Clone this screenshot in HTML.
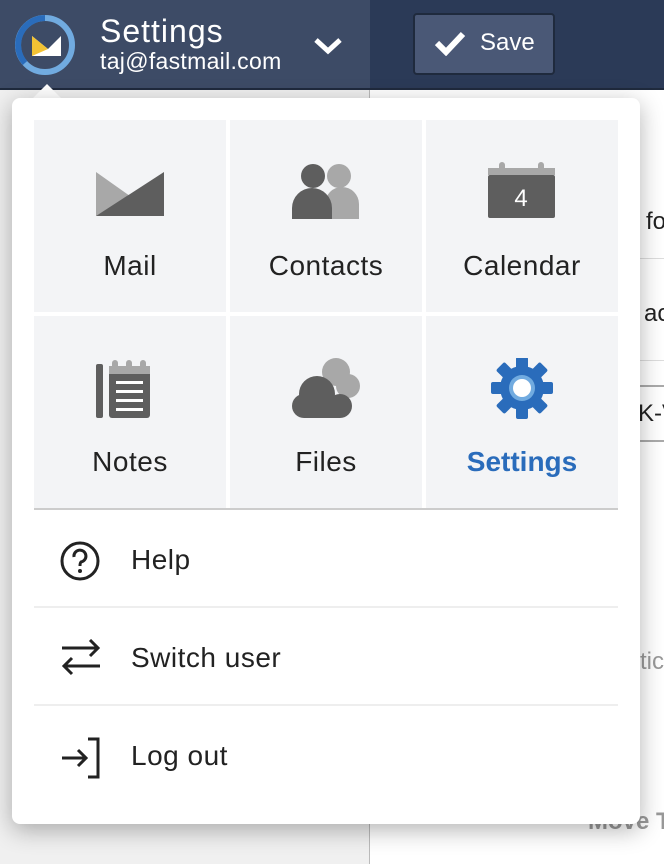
<!DOCTYPE html>
<html><head><style>
*{margin:0;padding:0;box-sizing:border-box}
body{width:664px;height:864px;overflow:hidden;position:relative;font-family:"Liberation Sans",sans-serif;background:#fff}
.hl{position:absolute;left:0;top:0;width:370px;height:88px;background:#3d4b66}
.hr{position:absolute;left:370px;top:0;width:294px;height:88px;background:#2b3a57}
.hline{position:absolute;left:0;top:88px;width:664px;height:2px;background:#1f2a3d}
.side{position:absolute;left:0;top:90px;width:370px;height:774px;background:#f0f0f0;border-right:1px solid #bbb}
.t{position:absolute;white-space:nowrap}
.pop{position:absolute;left:12px;top:98px;width:628px;height:726px;background:#fff;border-radius:8px;box-shadow:0 6px 24px rgba(0,0,0,.3)}
.cell{position:absolute;width:192px;height:192px;background:#f3f4f6}
.cell .l{position:absolute;left:0;right:0;top:130px;text-align:center;font-size:28px;letter-spacing:.5px;color:#222}
.cell svg{position:absolute;left:62px;top:40px}
.row{position:absolute;left:22px;width:584px;height:98px}
.row .l{position:absolute;left:97px;top:34px;font-size:28px;letter-spacing:.5px;color:#222}
.row svg{position:absolute;left:26px;top:31px}
</style></head><body>
<div class="hl"></div><div class="hr"></div><div class="hline"></div>
<div class="side"></div>
<svg style="position:absolute;left:13px;top:13px" width="64" height="64" viewBox="0 0 64 64"><circle cx="32" cy="32" r="27" fill="none" stroke="#71abe0" stroke-width="6"/><path d="M32 5 A27 27 0 0 0 12 50" fill="none" stroke="#2a6cbb" stroke-width="6"/><path d="M19 23 L35 36 L48 23 V43 H19Z" fill="#fff"/><path d="M19 23 L35 36 L19 43Z" fill="#f2c234"/></svg>
<div class="t" style="left:100px;top:13px;font-size:32px;letter-spacing:1px;color:#fff">Settings</div>
<div class="t" style="left:100px;top:48px;font-size:23px;letter-spacing:.3px;color:#fff">taj@fastmail.com</div>
<svg style="position:absolute;left:313px;top:36px" width="30" height="20"><path d="M3 4 L15 15 L27 4" fill="none" stroke="#fff" stroke-width="5"/></svg>
<div style="position:absolute;left:413px;top:13px;width:142px;height:62px;background:#4a5876;border:2px solid #1f2a3d;border-radius:4px"></div>
<svg style="position:absolute;left:434px;top:30px" width="32" height="26"><path d="M3 13 L12 22 L29 4" fill="none" stroke="#fff" stroke-width="6"/></svg>
<div class="t" style="left:480px;top:29px;font-size:24px;color:#fff">Save</div>
<div class="t" style="left:646px;top:208px;font-size:24px;color:#222">fo</div>
<div class="t" style="left:644px;top:300px;font-size:24px;color:#222">ac</div>
<div style="position:absolute;left:640px;top:258px;width:24px;height:1px;background:#ddd"></div>
<div style="position:absolute;left:640px;top:360px;width:24px;height:1px;background:#ddd"></div>
<div style="position:absolute;left:640px;top:385px;width:24px;height:2px;background:#aaa"></div>
<div style="position:absolute;left:640px;top:440px;width:24px;height:2px;background:#aaa"></div>
<div class="t" style="left:638px;top:400px;font-size:24px;color:#222">K-V</div>
<div class="t" style="left:640px;top:648px;font-size:24px;color:#999">tic</div>
<div class="t" style="left:588px;top:808px;font-size:24px;color:#999;font-weight:bold">Move T</div>
<div style="position:absolute;left:32px;top:84px;width:0;height:0;border-left:15px solid transparent;border-right:15px solid transparent;border-bottom:15px solid #fff"></div>
<div class="pop">
 <div class="cell" style="left:22px;top:22px"><svg width="68" height="60" style="top:46px"><path d="M0 6 L34 30 L0 50Z" fill="#a8a8a8"/><path d="M68 6 V50 H0Z" fill="#5e5e5e"/></svg><div class="l">Mail</div></div>
 <div class="cell" style="left:218px;top:22px"><svg width="68" height="58" style="top:42px"><circle cx="47" cy="14" r="12" fill="#a8a8a8"/><path d="M33 57 V42 A14 14 0 0 1 67 42 V57Z" fill="#a8a8a8"/><circle cx="21" cy="14" r="12" fill="#5e5e5e"/><path d="M0 57 V46 A20 20 0 0 1 40 46 V57Z" fill="#5e5e5e"/></svg><div class="l">Contacts</div></div>
 <div class="cell" style="left:414px;top:22px"><svg width="68" height="58" style="top:42px"><rect x="0" y="6" width="67" height="7" fill="#a8a8a8"/><rect x="11" y="0" width="6" height="10" rx="3" fill="#a8a8a8"/><rect x="50" y="0" width="6" height="10" rx="3" fill="#a8a8a8"/><rect x="0" y="13" width="67" height="43" rx="2" fill="#5e5e5e"/><text x="33" y="44" font-size="24" fill="#fff" text-anchor="middle" font-family="Liberation Sans">4</text></svg><div class="l">Calendar</div></div>
 <div class="cell" style="left:22px;top:218px"><svg width="68" height="60" style="top:42px"><rect x="0" y="6" width="7" height="54" rx="2" fill="#5e5e5e"/><rect x="13" y="8" width="41" height="52" rx="3" fill="#5e5e5e"/><rect x="13" y="8" width="41" height="8" fill="#a8a8a8"/><rect x="16" y="2" width="6" height="10" rx="3" fill="#a8a8a8"/><rect x="30" y="2" width="6" height="10" rx="3" fill="#a8a8a8"/><rect x="44" y="2" width="6" height="10" rx="3" fill="#a8a8a8"/><rect x="20" y="23" width="27" height="3" fill="#fff"/><rect x="20" y="32" width="27" height="3" fill="#fff"/><rect x="20" y="41" width="27" height="3" fill="#fff"/><rect x="20" y="50" width="27" height="3" fill="#fff"/></svg><div class="l">Notes</div></div>
 <div class="cell" style="left:218px;top:218px"><svg width="70" height="62" style="top:42px"><circle cx="44" cy="14" r="14" fill="#a8a8a8"/><circle cx="56" cy="28" r="12" fill="#a8a8a8"/><circle cx="25" cy="36" r="18" fill="#5e5e5e"/><circle cx="12" cy="48" r="12" fill="#5e5e5e"/><circle cx="48" cy="48" r="12" fill="#5e5e5e"/><rect x="12" y="42" width="36" height="18" fill="#5e5e5e"/></svg><div class="l">Files</div></div>
 <div class="cell" style="left:414px;top:218px"><svg width="68" height="64" viewBox="-34 -30 68 64" style="top:42px"><g fill="#2a6cbb"><circle r="22"/><g id="tt"><rect x="-6" y="-31" width="12" height="14" rx="2"/></g><use href="#tt" transform="rotate(45)"/><use href="#tt" transform="rotate(90)"/><use href="#tt" transform="rotate(135)"/><use href="#tt" transform="rotate(180)"/><use href="#tt" transform="rotate(225)"/><use href="#tt" transform="rotate(270)"/><use href="#tt" transform="rotate(315)"/></g><circle r="13" fill="#71abe0"/><circle r="9" fill="#fff"/></svg><div class="l" style="color:#2a6cbb;font-weight:bold;letter-spacing:0">Settings</div></div>
 <div style="position:absolute;left:22px;top:410px;width:584px;height:2px;background:#ccc"></div>
 <div class="row" style="top:412px"><svg width="44" height="44"><circle cx="20" cy="20" r="18" fill="none" stroke="#222" stroke-width="3"/><path d="M14 16 A6 6 0 1 1 21 21 Q20 22 20 25" fill="none" stroke="#222" stroke-width="3"/><circle cx="20" cy="30" r="2" fill="#222"/></svg><div class="l">Help</div></div>
 <div style="position:absolute;left:22px;top:508px;width:584px;height:2px;background:#eee"></div>
 <div class="row" style="top:510px"><svg width="44" height="44"><path d="M2 9 H38 M30 1 L38 9 L30 17 M40 27 H4 M12 19 L4 27 L12 35" fill="none" stroke="#222" stroke-width="3"/></svg><div class="l">Switch user</div></div>
 <div style="position:absolute;left:22px;top:606px;width:584px;height:2px;background:#eee"></div>
 <div class="row" style="top:608px"><svg width="44" height="44"><path d="M2 21 H26 M18 13 L26 21 L18 29 M28 2 H38 V40 H28" fill="none" stroke="#222" stroke-width="3"/></svg><div class="l">Log out</div></div>
</div>
</body></html>
